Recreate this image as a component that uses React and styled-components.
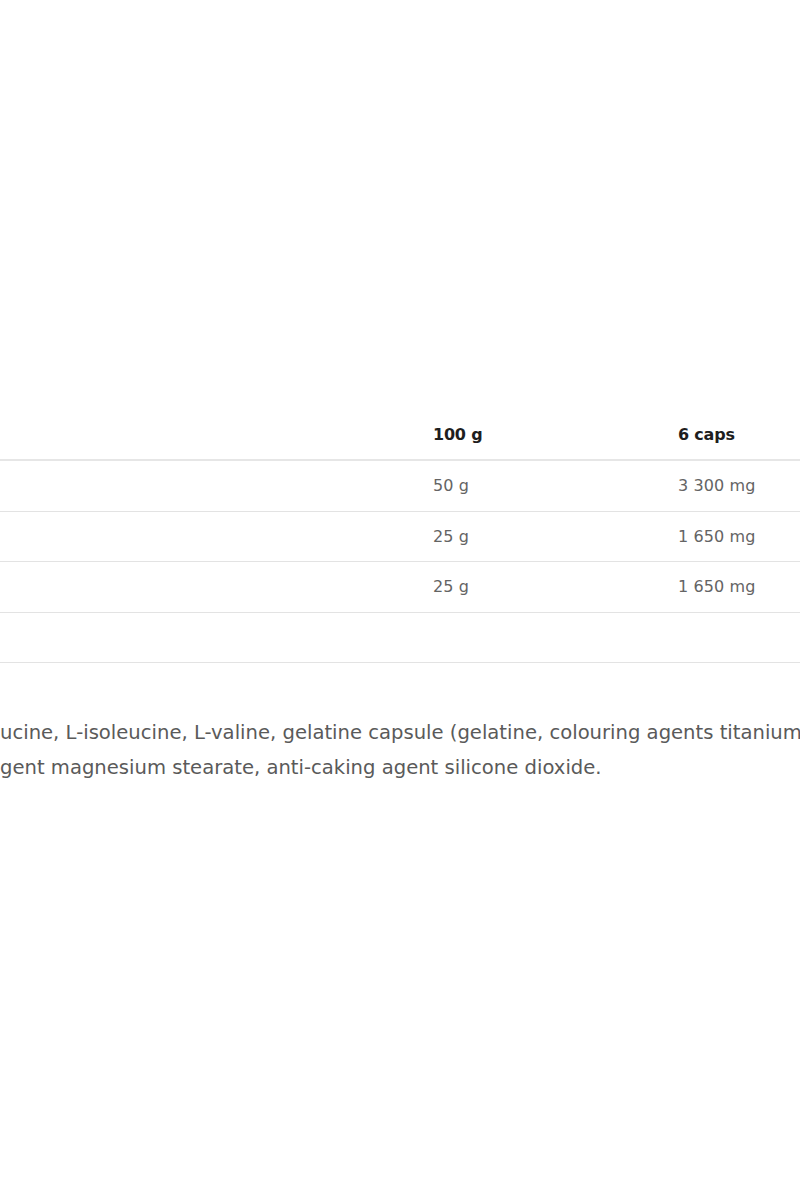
import React from "react";
import styled, { createGlobalStyle } from "styled-components";

const Global = createGlobalStyle`
  html, body { margin: 0; padding: 0; background: #fff; overflow: hidden; }
  body { font-family: "DejaVu Sans", "Liberation Sans", sans-serif; }
`;

const Page = styled.div`
  width: 800px;
  height: 1200px;
  padding-top: 410px;
  box-sizing: border-box;
  overflow: hidden;
`;

const Table = styled.div`
  display: flex;
  flex-direction: column;
`;

const Row = styled.div`
  display: grid;
  grid-template-columns: 433px 245px 1fr;
  align-items: center;
  border-bottom: ${(p) => (p.$head ? "2px solid #e6e6e6" : "1px solid #e3e3e3")};
  box-sizing: border-box;
  height: ${(p) => (p.$head ? "51px" : "50.5px")};
`;

const Cell = styled.div`
  font-size: 16px;
  color: ${(p) => (p.$head ? "#1e1e1e" : "#646464")};
  font-weight: ${(p) => (p.$head ? 700 : 400)};
  letter-spacing: ${(p) => (p.$head ? "-0.2px" : "0.1px")};
  white-space: nowrap;
`;

const Paragraph = styled.p`
  margin: 52px 0 0 0;
  font-size: 19.6px;
  line-height: 35px;
  color: #5a5a5a;
  white-space: nowrap;
`;

const rows = [
  ["50 g", "3 300 mg"],
  ["25 g", "1 650 mg"],
  ["25 g", "1 650 mg"],
  ["", ""],
];

export default function App() {
  return (
    <>
      <Global />
      <Page>
        <Table>
          <Row $head>
            <Cell />
            <Cell $head>100 g</Cell>
            <Cell $head>6 caps</Cell>
          </Row>
          {rows.map((r, i) => (
            <Row key={i}>
              <Cell />
              <Cell>{r[0]}</Cell>
              <Cell>{r[1]}</Cell>
            </Row>
          ))}
        </Table>
        <Paragraph>
          ucine, L-isoleucine, L-valine, gelatine capsule (gelatine, colouring agents titanium
          <br />
          gent magnesium stearate, anti-caking agent silicone dioxide.
        </Paragraph>
      </Page>
    </>
  );
}
